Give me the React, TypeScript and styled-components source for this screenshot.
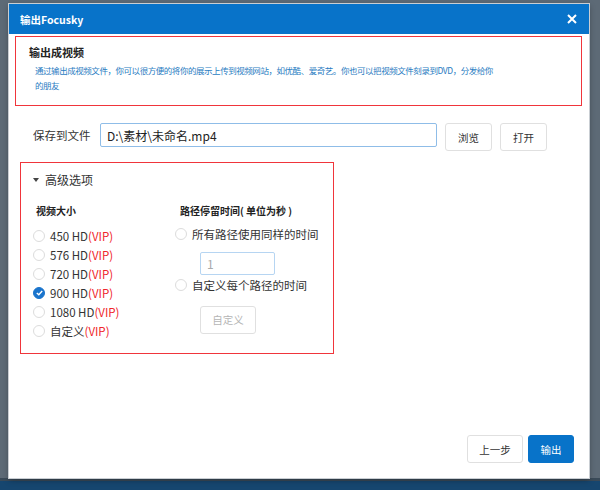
import React from 'react';
import styled, { createGlobalStyle } from 'styled-components';

const GlobalStyle = createGlobalStyle`
	html, body {
		margin: 0;
		padding: 0;
		background: #5d6a76;
	}
	body {
		font-family: 'Noto Sans CJK SC', 'Noto Sans', 'Liberation Sans', sans-serif;
	}
`;

const Page = styled.div`
	width: 600px;
	height: 490px;
	box-sizing: border-box;
	padding: 4px 11px 0 9px;
	background: linear-gradient(to bottom, #5d6a76 0, #5d6a76 478px, #3a4a58 478px, #3a4a58 481px, #16466f 481px);
	overflow: hidden;
`;

const Dialog = styled.div`
	width: 580px;
	height: 474px;
	background: #fff;
	display: flex;
	flex-direction: column;
	box-shadow: 0 0 0 1px #c9ced3, 0 2px 6px rgba(0, 0, 0, 0.35);
`;

const TitleBar = styled.div`
	height: 30px;
	background: #0873c9;
	color: #fff;
	display: flex;
	align-items: center;
	justify-content: space-between;
	padding: 0 10px 0 11px;
	font-size: 10.5px;
	font-weight: bold;
`;

const CloseBtn = styled.span`
	width: 14px;
	height: 14px;
	display: flex;
	align-items: center;
	justify-content: center;
`;

const Body = styled.div`
	flex: 1;
	display: flex;
	flex-direction: column;
	padding: 2px 7px 15px 6px;
`;

const IntroBox = styled.div`
	height: 70px;
	box-sizing: border-box;
	border: 1.5px solid #f0353b;
	padding: 7px 14px 0 13px;
`;

const IntroTitle = styled.div`
	font-size: 11px;
	font-weight: bold;
	color: #222;
	line-height: 16px;
`;

const IntroText = styled.div`
	margin-top: 3px;
	padding-left: 6px;
	width: 458px;
	font-size: 8.5px;
	letter-spacing: -0.45px;
	color: #2a7cc2;
	line-height: 15px;
`;

const SaveRow = styled.div`
	display: flex;
	align-items: flex-start;
	margin-top: 17px;
	padding-left: 18px;
`;

const Label = styled.span`
	font-size: 11.5px;
	line-height: 24px;
	color: #333;
	width: 67px;
`;

const PathInput = styled.div`
	width: 337px;
	height: 24px;
	box-sizing: border-box;
	border: 1px solid #8fbde8;
	border-radius: 2px;
	display: flex;
	align-items: center;
	padding-left: 6px;
	font-size: 12px;
	color: #222;
`;

const Btn = styled.div<{ $primary?: boolean; $disabled?: boolean; $w?: number }>`
	width: ${(p) => p.$w || 47}px;
	height: 28px;
	box-sizing: border-box;
	border: 1px solid ${(p) => (p.$primary ? '#0873c9' : '#e0e0e0')};
	background: ${(p) => (p.$primary ? '#0873c9' : '#fff')};
	color: ${(p) => (p.$primary ? '#fff' : p.$disabled ? '#b5b5b5' : '#333')};
	border-radius: 3px;
	display: flex;
	align-items: center;
	justify-content: center;
	font-size: 10.5px;
`;

const SaveButtons = styled.div`
	display: flex;
	gap: 8px;
	margin-left: 8px;
`;

const AdvBox = styled.div`
	margin-top: 11px;
	margin-left: 5px;
	width: 314px;
	height: 192px;
	box-sizing: border-box;
	border: 1.5px solid #f0353b;
	padding: 8px 0 0 12px;
`;

const AdvHeader = styled.div`
	display: flex;
	align-items: center;
	gap: 6px;
	font-size: 12px;
	line-height: 18px;
	color: #333;
	height: 18px;
`;

const Caret = styled.span`
	width: 0;
	height: 0;
	border-left: 3.5px solid transparent;
	border-right: 3.5px solid transparent;
	border-top: 4px solid #444;
`;

const Columns = styled.div`
	display: flex;
	margin-top: 14px;
`;

const Column = styled.div<{ $w: number }>`
	width: ${(p) => p.$w}px;
	display: flex;
	flex-direction: column;
`;

const ColTitle = styled.div<{ $indent: number; $gap: number }>`
	font-size: 10px;
	font-weight: bold;
	color: #222;
	height: 16px;
	line-height: 16px;
	padding-left: ${(p) => p.$indent}px;
	margin-bottom: ${(p) => p.$gap}px;
`;

const RadioRow = styled.div`
	display: flex;
	align-items: center;
	gap: 5px;
	height: 19px;
	font-size: 11.5px;
	color: #333;
`;

const Circle = styled.span<{ $on?: boolean }>`
	width: 12px;
	height: 12px;
	border-radius: 50%;
	box-sizing: border-box;
	border: 1px solid ${(p) => (p.$on ? '#1a74cc' : '#dcdcdc')};
	background: ${(p) => (p.$on ? '#1a74cc' : '#fff')};
	display: flex;
	align-items: center;
	justify-content: center;
	flex-shrink: 0;
`;

const Vip = styled.span`
	color: #f0252b;
`;

const SmallInput = styled.div`
	width: 75px;
	height: 23px;
	box-sizing: border-box;
	border: 1px solid #b6d5f2;
	border-radius: 2px;
	margin: 8px 0 1px 25px;
	display: flex;
	align-items: center;
	padding-left: 6px;
	font-size: 12px;
	color: #aaa;
`;

const BtnWrap = styled.div`
	margin: 11px 0 0 25px;
`;

const Footer = styled.div`
	margin-top: auto;
	display: flex;
	justify-content: flex-end;
	gap: 5px;
	padding-right: 8px;
`;

const Radio = ({ on, children }: { on?: boolean; children: React.ReactNode }) => (
	<RadioRow>
		<Circle $on={on}>
			{on && (
				<svg width="7" height="6" viewBox="0 0 7 6">
					<path d="M0.8 3 L2.8 4.8 L6.2 1" stroke="#fff" strokeWidth="1.4" fill="none" />
				</svg>
			)}
		</Circle>
		<span>{children}</span>
	</RadioRow>
);

const sizes = ['450 HD', '576 HD', '720 HD', '900 HD', '1080 HD', '自定义'];

export default function App() {
	return (
		<Page>
			<GlobalStyle />
			<Dialog>
				<TitleBar>
					<span>输出Focusky</span>
					<CloseBtn>
						<svg width="10" height="10" viewBox="0 0 10 10">
							<path d="M1 1 L9 9 M9 1 L1 9" stroke="#fff" strokeWidth="2" />
						</svg>
					</CloseBtn>
				</TitleBar>
				<Body>
					<IntroBox>
						<IntroTitle>输出成视频</IntroTitle>
						<IntroText>
							通过输出成视频文件，你可以很方便的将你的展示上传到视频网站，如优酷、爱奇艺。你也可以把视频文件刻录到DVD，分发给你的朋友
						</IntroText>
					</IntroBox>
					<SaveRow>
						<Label>保存到文件</Label>
						<PathInput>D:\素材\未命名.mp4</PathInput>
						<SaveButtons>
							<Btn>浏览</Btn>
							<Btn>打开</Btn>
						</SaveButtons>
					</SaveRow>
					<AdvBox>
						<AdvHeader>
							<Caret />
							<span>高级选项</span>
						</AdvHeader>
						<Columns>
							<Column $w={142}>
								<ColTitle $indent={3} $gap={7.5}>
									视频大小
								</ColTitle>
								{sizes.map((s) => (
									<Radio key={s} on={s === '900 HD'}>
										{s}
										<Vip>(VIP)</Vip>
									</Radio>
								))}
							</Column>
							<Column $w={150}>
								<ColTitle $indent={5} $gap={5.5}>
									路径停留时间( 单位为秒 )
								</ColTitle>
								<Radio>所有路径使用同样的时间</Radio>
								<SmallInput>1</SmallInput>
								<Radio>自定义每个路径的时间</Radio>
								<BtnWrap>
									<Btn $disabled $w={56}>
										自定义
									</Btn>
								</BtnWrap>
							</Column>
						</Columns>
					</AdvBox>
					<Footer>
						<Btn $w={56}>上一步</Btn>
						<Btn $primary $w={46}>
							输出
						</Btn>
					</Footer>
				</Body>
			</Dialog>
		</Page>
	);
}
